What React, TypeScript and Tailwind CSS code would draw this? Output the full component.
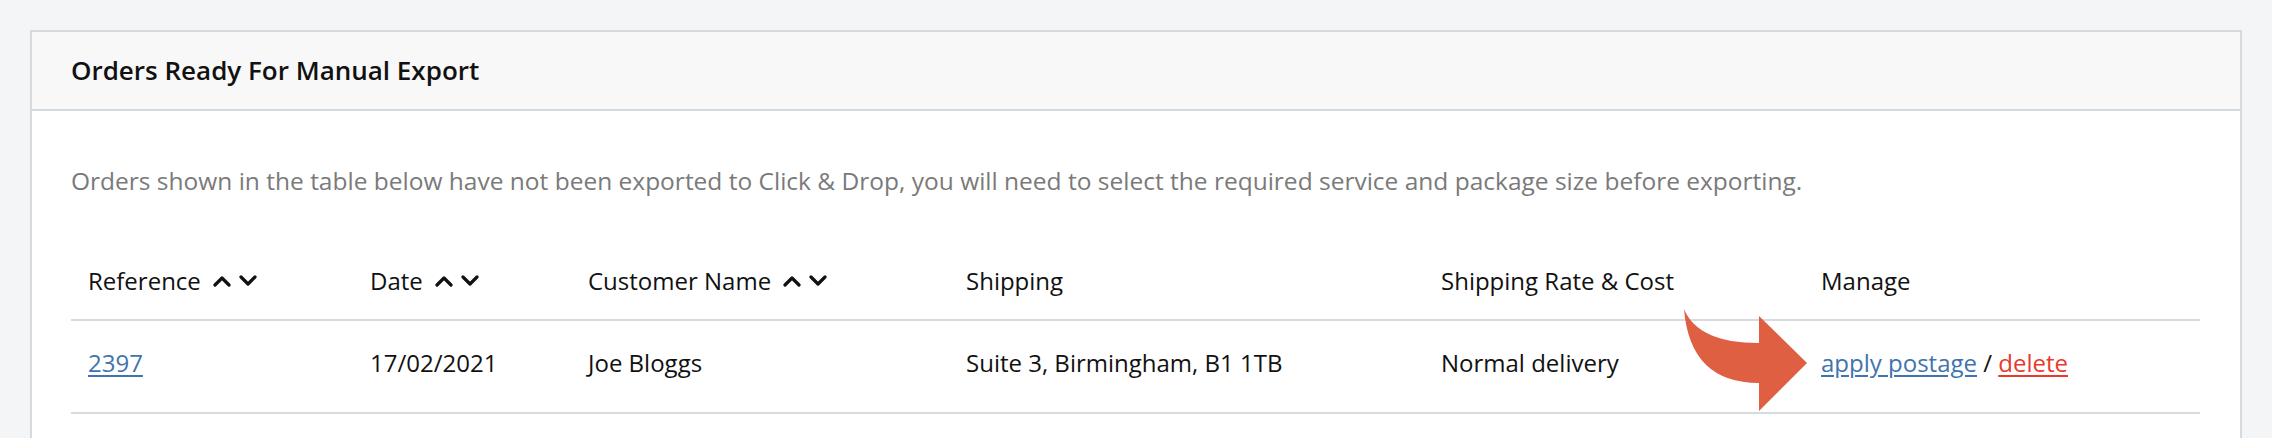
import React from 'react'

const font = { fontFamily: '"Open Sans", "Liberation Sans", sans-serif' }

function SortCarets() {
  return (
    <span className="ml-[12px] inline-flex items-center gap-[8px]">
      <svg className="w-[18px] h-[12px]" viewBox="0 0 18 12" fill="none" stroke="#111" strokeWidth={3.2} strokeLinecap="round" strokeLinejoin="round">
        <path d="M2 10L9 3l7 7" />
      </svg>
      <svg className="w-[18px] h-[12px]" viewBox="0 0 18 12" fill="none" stroke="#111" strokeWidth={3.2} strokeLinecap="round" strokeLinejoin="round">
        <path d="M2 2l7 7 7-7" />
      </svg>
    </span>
  )
}

function CurvedArrow() {
  return (
    <svg
      className="absolute left-[1609px] top-[-16px] w-[130px] h-[108px] z-10"
      viewBox="0 0 130 108"
      fill="#df5f42"
    >
      <path d="M4 4Q18 38 79 38L79 11L127 58L79 106L79 78Q10 78 4 4Z" />
    </svg>
  )
}

const cols = 'grid grid-cols-[282px_218px_378px_475px_380px_1fr]'

export default function App() {
  return (
    <div className="h-[438px] overflow-hidden bg-[#f4f5f7] px-[30px] pt-[30px]" style={font}>
      <div className="h-[430px] border-2 border-[#d3dbe0] bg-white">
        <div className="flex h-[79px] items-center border-b-2 border-[#d3dbe0] bg-[#f8f8f8] px-[39px]">
          <h2 className="text-[26px] font-semibold text-[#111]">Orders Ready For Manual Export</h2>
        </div>

        <div className="pl-[39px] pr-[40px]">
          <p className="pt-[54px] text-[24.5px] leading-[32px] text-[#7a7a7a]">
            Orders shown in the table below have not been exported to Click &amp; Drop, you will need to select the required service and package size before exporting.
          </p>

          <div className="mt-[46px] text-[24px] text-[#111]">
            <div className={`${cols} h-[78px] items-center border-b-2 border-[#d5dbdf]`}>
              <div className="flex items-center pl-[17px]">Reference<SortCarets /></div>
              <div className="flex items-center pl-[17px]">Date<SortCarets /></div>
              <div className="flex items-center pl-[17px]">Customer Name<SortCarets /></div>
              <div className="pl-[17px]">Shipping</div>
              <div className="pl-[17px]">Shipping Rate &amp; Cost</div>
              <div className="pl-[17px]">Manage</div>
            </div>

            <div className={`${cols} relative h-[93px] items-center border-b-2 border-[#d5dbdf] pb-[7px]`}>
              <div className="pl-[17px]">
                <a href="#" className="text-[#3f74ae] underline underline-offset-[3px]">2397</a>
              </div>
              <div className="pl-[17px]">17/02/2021</div>
              <div className="pl-[17px]">Joe Bloggs</div>
              <div className="pl-[17px]">Suite 3, Birmingham, B1 1TB</div>
              <div className="pl-[17px]">Normal delivery</div>
              <div className="pl-[17px]">
                <a href="#" className="text-[#3f74ae] underline underline-offset-[3px]">apply postage</a>
                <span> / </span>
                <a href="#" className="text-[#e8392c] underline underline-offset-[3px]">delete</a>
              </div>
              <CurvedArrow />
            </div>
          </div>
        </div>
      </div>
    </div>
  )
}
